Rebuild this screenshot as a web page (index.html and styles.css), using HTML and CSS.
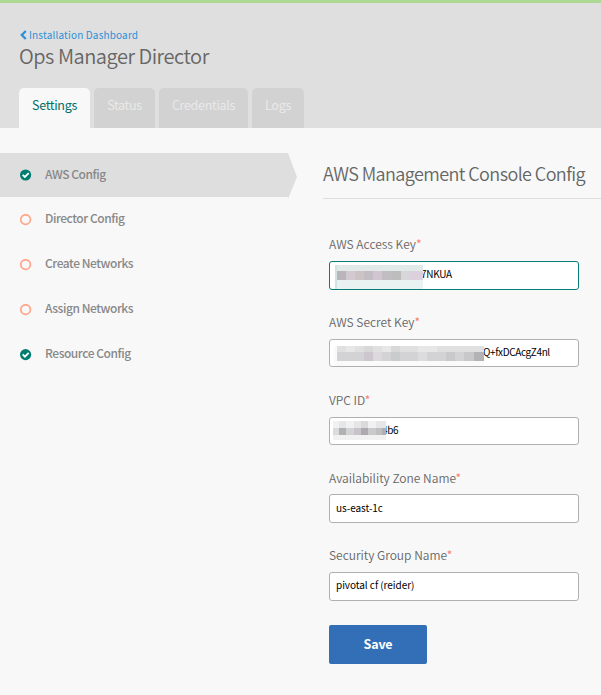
FILE: index.html
```html
<!DOCTYPE html>
<html lang="en">
<head>
<meta charset="utf-8">
<title>Ops Manager Director</title>
<link rel="stylesheet" href="styles.css">
</head>
<body>
<header class="header">
  <a class="back"><svg width="7" height="10" viewBox="0 0 7 10"><path d="M5.8 1 1.8 5l4 4" fill="none" stroke="currentColor" stroke-width="2.3"/></svg><span>Installation Dashboard</span></a>
  <h1 class="title"><span>Ops Manager Director</span></h1>
  <nav class="tabs">
    <a class="tab active w-settings"><span>Settings</span></a>
    <a class="tab w-status"><span>Status</span></a>
    <a class="tab w-credentials"><span>Credentials</span></a>
    <a class="tab w-logs"><span>Logs</span></a>
  </nav>
</header>
<main class="main">
  <ul class="steps">
    <li class="step current"><svg class="mark" viewBox="0 0 12 12"><circle cx="5.6" cy="6" r="5.6" fill="#007d70"/><path d="M2.7 5.8l2.2 2.2 3.8-3.8" fill="none" stroke="#fff" stroke-width="1.9"/></svg><span>AWS Config</span></li>
    <li class="step"><svg class="mark" viewBox="0 0 12 12"><circle cx="5.6" cy="5.6" r="4.8" fill="none" stroke="#ffa78d" stroke-width="1.7"/></svg><span>Director Config</span></li>
    <li class="step"><svg class="mark" viewBox="0 0 12 12"><circle cx="5.6" cy="5.6" r="4.8" fill="none" stroke="#ffa78d" stroke-width="1.7"/></svg><span>Create Networks</span></li>
    <li class="step"><svg class="mark" viewBox="0 0 12 12"><circle cx="5.6" cy="5.6" r="4.8" fill="none" stroke="#ffa78d" stroke-width="1.7"/></svg><span>Assign Networks</span></li>
    <li class="step"><svg class="mark" viewBox="0 0 12 12"><circle cx="5.6" cy="5.6" r="5.6" fill="#007d70"/><path d="M2.7 5.4l2.2 2.2 3.8-3.8" fill="none" stroke="#fff" stroke-width="1.9"/></svg><span>Resource Config</span></li>
  </ul>
  <section class="content">
    <h2 class="heading"><span>AWS Management Console Config</span></h2>
    <form class="form">
      <div class="field"><label><span>AWS Access Key</span><i>*</i></label><div class="input focus"><span class="key1">7NKUA</span>
        <svg class="mask mask1" width="88" height="24" shape-rendering="crispEdges">
          <path fill="#e1eae9" d="M0 0h88v15H0z"/><path fill="#e9f2f1" d="M0 15h88v9H0z"/><path fill="#d2e4e1" d="M0 0h2v24H0z"/>
          <path fill="#bab5bb" d="M2 6h9v9H2z"/><path fill="#d2c9d1" d="M11 6h9v9h-9z"/><path fill="#cbc3c4" d="M20 6h9v9h-9z"/><path fill="#c2bdc3" d="M29 6h9v9h-9z"/><path fill="#d0c5d0" d="M38 6h9v9h-9z"/><path fill="#c1bdc1" d="M47 6h10v9H47z"/><path fill="#bdbdbd" d="M57 6h9v9h-9z"/><path fill="#d7d6d9" d="M66 6h9v9h-9z"/><path fill="#dcd0dc" d="M75 6h13v9H75z"/>
        </svg></div></div>
      <div class="field"><label><span>AWS Secret Key</span><i>*</i></label><div class="input short"><span class="key2">Q+fxDCAcgZ4nl</span>
        <svg class="mask mask2" width="150" height="20" shape-rendering="crispEdges">
          <path fill="#fafafa" d="M0 0h150v20H0z"/><path fill="#e0e0e0" d="M3 0h147v6H3z"/><path fill="#d3d3d5" d="M3 6h147v9H3z"/>
          <path fill="#d8d8d8" d="M30 0h9v6h-9zM57 0h9v6h-9z"/><path fill="#e7e7e7" d="M12 0h9v6h-9zM48 0h9v6h-9zM84 0h19v6H84z"/>
          <path fill="#cdc6ce" d="M30 6h9v9h-9z"/><path fill="#ddd8dd" d="M39 6h9v9h-9z"/><path fill="#c9cbcd" d="M57 6h9v9h-9z"/><path fill="#dcdcde" d="M84 6h9v9h-9z"/><path fill="#c9c8ca" d="M112 6h9v9h-9z"/><path fill="#c8c8cb" d="M130 6h10v9h-10z"/><path fill="#b3b3b6" d="M140 6h10v9h-10z"/>
        </svg></div></div>
      <div class="field"><label><span>VPC ID</span><i>*</i></label><div class="input short"><span class="key3">4b6</span>
        <svg class="mask mask3" width="53" height="19" shape-rendering="crispEdges">
          <path fill="#f1f1f1" d="M0 0h53v19H0z"/><path fill="#e6e6e6" d="M6 0h7v7H6zM21 0h7v7h-7zM43 0h10v7H43z"/><path fill="#dadada" d="M28 0h7v7h-7z"/>
          <path fill="#dbdbdb" d="M0 7h6v7H0z"/><path fill="#b1b1b3" d="M6 7h7v7H6z"/><path fill="#d0d4d4" d="M13 7h8v7h-8z"/><path fill="#c8c3c8" d="M21 7h7v7h-7z"/><path fill="#aea8b1" d="M28 7h7v7h-7z"/><path fill="#cbc8cb" d="M35 7h8v7h-8z"/><path fill="#bec0bd" d="M43 7h6v7h-6z"/><path fill="#b1acb7" d="M49 7h4v7h-4z"/>
        </svg></div></div>
      <div class="field"><label class="low"><span>Availability Zone Name</span><i>*</i></label><div class="input plain"><span>us-east-1c</span></div></div>
      <div class="field"><label><span>Security Group Name</span><i>*</i></label><div class="input plain last"><span>pivotal cf (reider)</span></div></div>
      <button class="save" type="button"><span>Save</span></button>
    </form>
  </section>
</main>
</body>
</html>
```
FILE: styles.css
```css
* { box-sizing: border-box; }
body {
  margin: 0;
  height: 695px;
  overflow: hidden;
  background: #f8f8f8;
  color: #666;
  font-family: "Noto Sans CJK SC", "Noto Sans", sans-serif;
}
.header { height: 128px; padding: 25px 19px 0; border-top: 3px solid #aed995; background: #dfdfdf; }
.back { display: flex; align-items: center; gap: 2px; height: 13px; padding-left: 1px; color: #2d8fd5; font-size: 10px; letter-spacing: .16px; }
.title { height: 30px; margin: 0; font-size: 20px; font-weight: 350; line-height: 30px; letter-spacing: -.47px; }
.tabs { display: flex; gap: 4px; margin-top: 17px; }
.tab { height: 40px; padding-top: 7px; border-radius: 5px 5px 0 0; background: #d2d2d2; color: #e9e9e9; font-size: 12.5px; line-height: 20px; letter-spacing: -.3px; text-align: center; }
.active { background: #f8f8f8; color: #007069; }
.w-settings { width: 71px; }
.w-status { width: 61px; }
.w-credentials { width: 89px; }
.w-logs { width: 52px; }
.main { display: flex; }
.steps { width: 297px; margin: 25px 26px 0 0; padding: 0; list-style: none; flex: none; }
.step { display: flex; align-items: center; gap: 13px; height: 45px; padding-left: 20px; font-size: 12px; font-weight: 500; letter-spacing: -.45px; line-height: 18px; color: #888; }
.step span { padding-bottom: 3px; }
.current { height: 46px; margin-bottom: -2px; padding-bottom: 2px; background: #dedede; clip-path: polygon(0 0, 288px 0, 297px 24px, 288px 46px, 288px 44px, 0 44px); }
.mark { width: 12px; height: 12px; flex: none; }
.content { flex: 1; min-width: 0; }
.heading { height: 71px; margin: 0; padding-top: 31px; border-bottom: 1px solid #dedede; font-size: 18px; font-weight: 350; line-height: 28px; letter-spacing: -.59px; white-space: nowrap; }
.form { padding: 37px 0 0 6px; }
.field { height: 77.75px; }
.field label { display: block; height: 25px; font-size: 12px; font-weight: 350; line-height: 16px; }
.field .low { padding-top: 1px; }
.field i { color: #f87660; font-style: normal; }
.input { position: relative; display: flex; align-items: center; width: 250px; height: 29px; padding: 0 6px 3px; border: 1px solid #b0b0b0; border-radius: 3px; background: #fff; color: #000; font-size: 10px; line-height: 14px; letter-spacing: -.3px; }
.short { height: 28px; padding-bottom: 2px; letter-spacing: -.37px; }
.plain { letter-spacing: -.05px; padding-bottom: 2px; }
.last { padding-bottom: 3px; }
.focus { border-color: #077d74; }
.key1 { margin-left: 85px; }
.key2 { margin-left: 147px; }
.key3 { margin-left: 46px; }
.mask { position: absolute; }
.mask1 { left: 5px; top: 3px; }
.mask2 { left: 4px; top: 6px; }
.mask3 { left: 3px; top: 3px; }
.save { width: 98px; height: 39px; border: 0; border-radius: 2px; background: #326fb6; color: #fff; font: 700 12.5px/20px "Noto Sans CJK SC", sans-serif; letter-spacing: -.2px; }
```
